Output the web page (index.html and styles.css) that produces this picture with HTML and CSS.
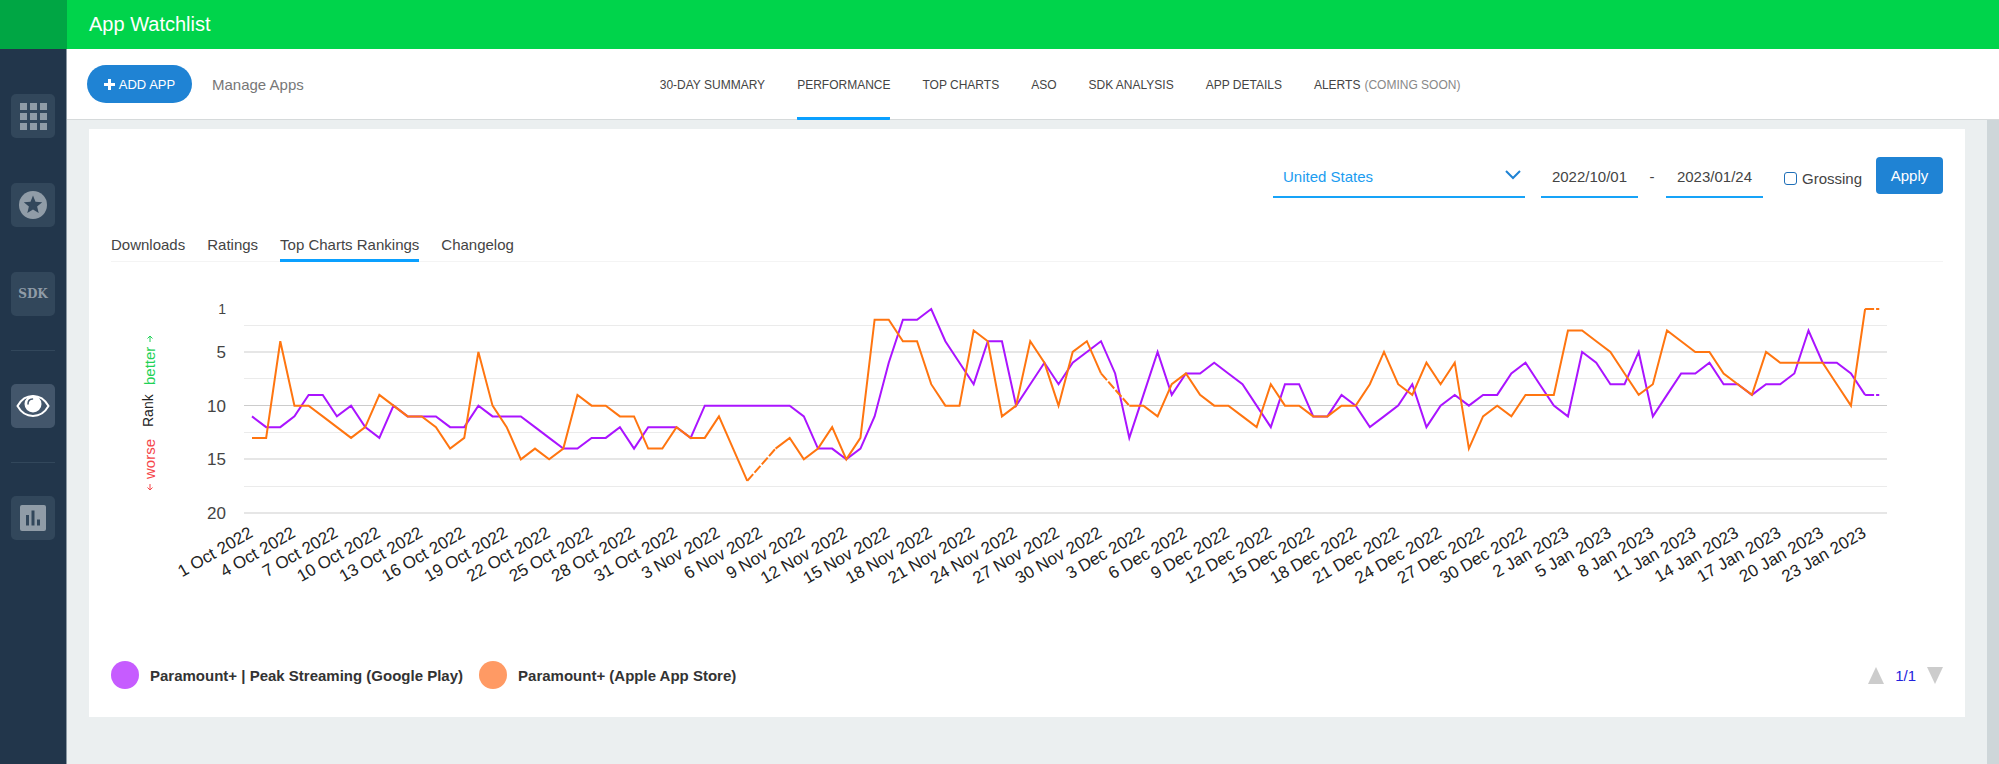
FILE: index.html
```html
<!DOCTYPE html>
<html lang="en">
<head>
    <meta charset="UTF-8">
    <meta name="viewport" content="width=device-width, initial-scale=1.0">
    <title>App Watchlist</title>
    <link rel="stylesheet" href="styles.css">
</head>
<body>
    <aside class="sidebar">
        <div class="sidebar-top"></div>
        <nav class="sidebar-nav" aria-label="Main">
            <a href="#" class="tile" aria-label="Apps">
                <svg width="28" height="28" viewBox="0 0 28 28" fill="currentColor">
                    <path d="M1 1h7v7H1zM11 1h7v7h-7zM21 1h7v7h-7zM1 11h7v7H1zM11 11h7v7h-7zM21 11h7v7h-7zM1 21h7v7H1zM11 21h7v7h-7zM21 21h7v7h-7z"/>
                </svg>
            </a>
            <a href="#" class="tile" aria-label="Top charts">
                <svg width="28" height="28" viewBox="0 0 28 28">
                    <circle cx="14" cy="14" r="14" fill="currentColor"/>
                    <path class="cutout" d="M14 4.500l2.500 6.200 6.700.5-5.100 4.300 1.600 6.500-5.700-3.500L8.300 22l1.600-6.500-5.100-4.300 6.700-.5z"/>
                </svg>
            </a>
            <a href="#" class="tile tile-sdk">SDK</a>
            <hr>
            <a href="#" class="tile active" aria-label="Watchlist">
                <svg width="34" height="24" viewBox="0 0 34 24">
                    <path d="M1.500 12C9-1.300 25-1.300 32.500 12 25 25.300 9 25.300 1.500 12z" fill="none" stroke="currentColor" stroke-width="2"/>
                    <circle cx="17" cy="10" r="8.500" fill="currentColor"/>
                    <path class="glint" d="M12 10c0-3 1.500-4.800 4.500-5" fill="none" stroke-width="1.500" stroke-linecap="round"/>
                </svg>
            </a>
            <hr>
            <a href="#" class="tile" aria-label="Reports">
                <svg width="26" height="26" viewBox="0 0 26 26">
                    <rect width="26" height="26" rx="2" fill="currentColor"/>
                    <path class="cutout" d="M6 10h3v10.500H6zM11.500 5.500h3v15h-3zM17 14.500h3v6h-3z"/>
                </svg>
            </a>
        </nav>
    </aside>

    <div class="main">
        <header class="title-bar">
            <h1>App Watchlist</h1>
        </header>

        <div class="toolbar">
            <button type="button" class="add-btn">
                <svg width="11" height="11" viewBox="0 0 11 11" fill="currentColor"><path d="M4 0h3v4h4v3H7v4H4V7H0V4h4z"/></svg>
                ADD APP
            </button>
            <a href="#" class="manage">Manage Apps</a>
            <nav class="sections" aria-label="Sections">
                <a href="#">30-DAY SUMMARY</a>
                <a href="#" class="active">PERFORMANCE</a>
                <a href="#">TOP CHARTS</a>
                <a href="#">ASO</a>
                <a href="#">SDK ANALYSIS</a>
                <a href="#">APP DETAILS</a>
                <a href="#">ALERTS <span>(COMING SOON)</span></a>
            </nav>
        </div>

        <div class="content">
            <main class="card">
                <form class="filters">
                    <div class="country">
                        <select name="country" aria-label="Country">
                            <option>United States</option>
                        </select>
                        <svg width="16" height="10" viewBox="0 0 16 10"><path d="M1 1l7 7 7-7" fill="none" stroke="currentColor" stroke-width="2"/></svg>
                    </div>
                    <input type="text" class="date" name="from" value="2022/10/01" aria-label="From date">
                    <span class="dash">-</span>
                    <input type="text" class="date" name="to" value="2023/01/24" aria-label="To date">
                    <label class="grossing"><input type="checkbox" name="grossing">Grossing</label>
                    <button type="submit" class="apply-btn">Apply</button>
                </form>

                <nav class="tabs" aria-label="Performance">
                    <a href="#">Downloads</a>
                    <a href="#">Ratings</a>
                    <a href="#" class="active">Top Charts Rankings</a>
                    <a href="#">Changelog</a>
                </nav>

                <svg class="chart" id="chart" viewBox="0 0 1832 399" role="img" aria-label="Top charts ranking by day"></svg>

                <footer class="legend">
                    <span class="dot google"></span>
                    <span class="name">Paramount+ | Peak Streaming (Google Play)</span>
                    <span class="dot apple"></span>
                    <span class="name">Paramount+ (Apple App Store)</span>
                    <div class="pager">
                        <button type="button" aria-label="Previous"><svg width="16" height="17" viewBox="0 0 16 17"><path d="M8 0l8 17H0z"/></svg></button>
                        <span>1/1</span>
                        <button type="button" aria-label="Next"><svg width="16" height="17" viewBox="0 0 16 17"><path d="M0 0h16L8 17z"/></svg></button>
                    </div>
                </footer>
            </main>
            <div class="scroll-track"></div>
        </div>
    </div>

    <script src="chart.js"></script>
</body>
</html>
```

FILE: styles.css
```css
* {
    margin: 0;
    padding: 0;
    box-sizing: border-box;
}

body {
    font-family: "Liberation Sans", Arial, sans-serif;
    font-size: 15px;
    color: #444;
    min-height: 100vh;
    display: flex;
}

a {
    color: inherit;
    text-decoration: none;
}

button, input, select {
    font: inherit;
    border: none;
    background: none;
}

button {
    cursor: pointer;
}

/* Sidebar */
.sidebar {
    width: 67px;
    flex: none;
    background: #22364b;
    border-right: 1px solid #8b98a3;
}

.sidebar-top {
    height: 49px;
    margin-right: -1px;
    background: #00a644;
}

.sidebar-nav {
    display: flex;
    flex-direction: column;
    align-items: center;
    gap: 45px;
    padding-top: 45px;
}

.tile {
    width: 44px;
    height: 44px;
    display: flex;
    align-items: center;
    justify-content: center;
    border-radius: 5px;
    background: #32475b;
    color: #909ca7;
}

.tile.active {
    background: #43566b;
    color: #fff;
}

.tile-sdk {
    font-family: "DejaVu Serif", serif;
    font-size: 12px;
    font-weight: bold;
}

.cutout {
    fill: #32475b;
}

.glint {
    stroke: #43566b;
}

.sidebar-nav hr {
    width: 44px;
    border: none;
    border-top: 1px solid #32475b;
    margin: -11px 0 -12px;
}

/* Header */
.main {
    flex: 1;
    min-width: 0;
    display: flex;
    flex-direction: column;
}

.title-bar {
    height: 49px;
    padding: 0 22px;
    display: flex;
    align-items: center;
    background: #00d44b;
}

.title-bar h1 {
    font-size: 20px;
    font-weight: normal;
    color: #fff;
}

.toolbar {
    height: 71px;
    padding: 0 20px;
    display: flex;
    align-items: center;
    background: #fff;
    border-bottom: 1px solid #d6dadb;
}

.add-btn {
    width: 105px;
    height: 38px;
    display: flex;
    align-items: center;
    justify-content: center;
    gap: 4px;
    border-radius: 19px;
    background: #1f83d4;
    color: #fff;
    font-size: 13px;
}

.manage {
    margin-left: 20px;
    color: #777;
}

.sections {
    align-self: stretch;
    display: flex;
    gap: 32px;
    margin-left: 356px;
    margin-bottom: -2px;
    font-size: 12px;
    white-space: nowrap;
}

.sections a {
    display: flex;
    align-items: center;
    gap: 4px;
    padding-top: 4px;
    border-bottom: 4px solid transparent;
    border-radius: 2px;
}

.sections a.active {
    border-bottom-color: #0aa0ff;
}

.sections span {
    color: #888;
}

/* Card */
.content {
    flex: 1;
    display: flex;
    align-items: flex-start;
    background: #ebeff0;
}

.card {
    flex: 1;
    min-width: 0;
    margin: 9px 22px 46px;
    padding: 28px 22px;
    background: #fff;
}

.scroll-track {
    width: 12px;
    align-self: stretch;
    background: #ced6d9;
}

.filters {
    display: flex;
    justify-content: flex-end;
    align-items: flex-start;
}

.country {
    display: grid;
    width: 252px;
    margin-right: 16px;
    align-items: center;
    color: #1f83d4;
}

.country select,
.country svg {
    grid-area: 1 / 1;
}

.country select {
    height: 41px;
    padding: 0 10px;
    appearance: none;
    border-bottom: 2px solid #17a3f8;
    color: #1b9cf0;
}

.country svg {
    justify-self: end;
    margin-right: 4px;
    margin-bottom: 6px;
    pointer-events: none;
}

.date {
    width: 97px;
    height: 41px;
    text-align: center;
    border-bottom: 2px solid #17a3f8;
    color: #444;
}

.dash {
    width: 28px;
    line-height: 39px;
    text-align: center;
}

.grossing {
    display: flex;
    align-items: center;
    gap: 5px;
    height: 43px;
    margin: 0 14px 0 21px;
}

.grossing input {
    width: 13px;
    height: 13px;
    appearance: none;
    border: 1px solid #1f6fb8;
    border-radius: 3px;
}

.apply-btn {
    width: 67px;
    height: 37px;
    border-radius: 4px;
    background: #1f83d4;
    color: #fff;
}

.tabs {
    display: flex;
    gap: 22px;
    margin-top: 31px;
    border-bottom: 1px solid #f4f4f4;
}

.tabs a {
    height: 28px;
    line-height: 28px;
    margin-bottom: -1px;
    border-bottom: 3px solid transparent;
    box-sizing: content-box;
}

.tabs a.active {
    border-bottom-color: #0aa0ff;
}

/* Chart */
.chart {
    display: block;
    width: 100%;
    height: auto;
}

.chart text {
    font-size: 17px;
    fill: #444;
    text-anchor: end;
}

.chart .date-label {
    fill: #222;
}

.chart .first {
    font-size: 14px;
}

.chart .side {
    font-size: 15px;
    text-anchor: start;
}

.chart .side.rank {
    font-size: 14px;
    fill: #222;
}

.chart .better {
    fill: #1fd257;
    stroke: #1fd257;
}

.chart .worse {
    fill: #f5464a;
    stroke: #f5464a;
}

.chart text.better,
.chart text.worse {
    stroke: none;
}

.chart .grid {
    stroke: #e6e6e6;
    stroke-width: 2;
}

.chart .grid.middle {
    stroke: #ccc;
    stroke-width: 1;
}

.chart .grid.minor {
    stroke: #ebebeb;
    stroke-width: 1;
}

.chart .line {
    fill: none;
    stroke-width: 2;
}

.chart .line.google {
    stroke: #aa14ff;
}

.chart .line.apple {
    stroke: #ff7510;
}

.chart .dashed {
    stroke-dasharray: 9 2;
}

/* Legend */
.legend {
    display: flex;
    align-items: center;
    height: 28px;
}

.dot {
    width: 28px;
    height: 28px;
    border-radius: 50%;
    margin-right: 11px;
}

.dot.google {
    background: #c65cff;
}

.dot.apple {
    background: #ff9a64;
}

.name {
    margin-right: 16px;
    font-weight: bold;
    color: #333;
}

.pager {
    margin-left: auto;
    display: flex;
    align-items: center;
    gap: 11px;
    color: #2222dd;
}

.pager svg {
    display: block;
    fill: #ccc;
}
```

FILE: chart.js
```js
const chart = document.getElementById('chart');

// One rank per day from 1 Oct 2022; null is a day without data
const google = [
    11, 12, 12, 11, 9, 9, 11, 10, 12, 13, 10, 11, 11, 11, 12, 12, 10, 11, 11, 11,
    12, 13, 14, 14, 13, 13, 12, 14, 12, 12, 12, 13, 10, 10, 10, 10, 10, 10, 10, 11,
    14, 14, 15, 14, 11, 6, 2, 2, 1, 4, 6, 8, 4, 4, 10, 8, 6, 8, 6, 5,
    4, 7, 13, 9, 5, 9, 7, 7, 6, 7, 8, 10, 12, 8, 8, 11, 11, 9, 10, 12,
    11, 10, 8, 12, 10, 9, 10, 9, 9, 7, 6, 8, 10, 11, 5, 6, 8, 8, 5, 11,
    9, 7, 7, 6, 8, 8, 9, 8, 8, 7, 3, 6, 6, 7, 9, 9
];
const apple = [
    13, 13, 4, 10, 10, 11, 12, 13, 12, 9, 10, 11, 11, 12, 14, 13, 5, 10, 12, 15,
    14, 15, 14, 9, 10, 10, 11, 11, 14, 14, 12, 13, 13, 11, 14, 17, null, 14, 13, 15,
    14, 12, 15, 13, 2, 2, 4, 4, 8, 10, 10, 3, 4, 11, 10, 4, 6, 10, 5, 4,
    7, null, 10, 10, 11, 8, 7, 9, 10, 10, 11, 12, 8, 10, 10, 11, 11, 10, 10, 8,
    5, 8, 9, 6, 8, 6, 14, 11, 10, 11, 9, 9, 9, 3, 3, 4, 5, 7, 9, 8,
    3, 4, 5, 5, 7, 8, 9, 5, 6, 6, 6, 6, 8, 10, 1, 1
];

const x = day => 141 + day * 14.15;
const y = rank => 47 + (rank - 1) * 10.74;

function add(tag, attrs, text) {
    const el = document.createElementNS('http://www.w3.org/2000/svg', tag);
    for (const key in attrs) el.setAttribute(key, attrs[key]);
    if (text) el.textContent = text;
    chart.appendChild(el);
}

function drawGrid() {
    for (let rank = 2.5; rank <= 20; rank += 2.5) {
        const kind = rank === 10 ? 'grid middle' : rank % 5 ? 'grid minor' : 'grid';
        const top = kind === 'grid' ? Math.round(y(rank)) : Math.floor(y(rank)) + 0.5;
        add('line', { class: kind, x1: 133, x2: 1776, y1: top, y2: top });
    }
    add('text', { class: 'first', x: 115, y: y(1) + 5 }, '1');
    [5, 10, 15, 20].forEach(rank => add('text', { x: 115, y: y(rank) + 6 }, rank));
}

function drawSide() {
    add('text', { class: 'side worse', transform: 'translate(44 217) rotate(-90)' }, 'worse');
    add('text', { class: 'side rank', transform: 'translate(42 165) rotate(-90)' }, 'Rank');
    add('text', { class: 'side better', transform: 'translate(44 123) rotate(-90)' }, 'better');
    add('path', { class: 'worse', 'fill-opacity': 0, d: 'M39 222v6M36.500 225.500l2.500 2.500 2.500-2.500' });
    add('path', { class: 'better', 'fill-opacity': 0, d: 'M39 80v-6M36.500 76.500l2.500-2.500 2.500 2.500' });
}

function drawLine(ranks, name) {
    let prev = 0;
    let solid = `M${x(0)} ${y(ranks[0])}`;
    let dashed = '';
    for (let day = 1; day < ranks.length; day++) {
        if (ranks[day] === null) continue;
        const point = `${x(day)} ${y(ranks[day])}`;
        // gaps and the last, unfinished day are dashed
        if (day - prev > 1 || day === ranks.length - 1) {
            dashed += `M${x(prev)} ${y(ranks[prev])}L${point}`;
            solid += `M${point}`;
        } else {
            solid += `L${point}`;
        }
        prev = day;
    }
    add('path', { class: `line ${name}`, d: solid });
    add('path', { class: `line dashed ${name}`, d: dashed });
}

function drawDates() {
    const months = ['Jan', 'Feb', 'Mar', 'Apr', 'May', 'Jun', 'Jul', 'Aug', 'Sep', 'Oct', 'Nov', 'Dec'];
    for (let day = 0; day < google.length; day += 3) {
        const date = new Date(2022, 9, 1 + day);
        const label = `${date.getDate()} ${months[date.getMonth()]} ${date.getFullYear()}`;
        add('text', { class: 'date-label', transform: `translate(${x(day) + 2} 274) rotate(-30)` }, label);
    }
}

drawGrid();
drawSide();
drawLine(google, 'google');
drawLine(apple, 'apple');
drawDates();
```
